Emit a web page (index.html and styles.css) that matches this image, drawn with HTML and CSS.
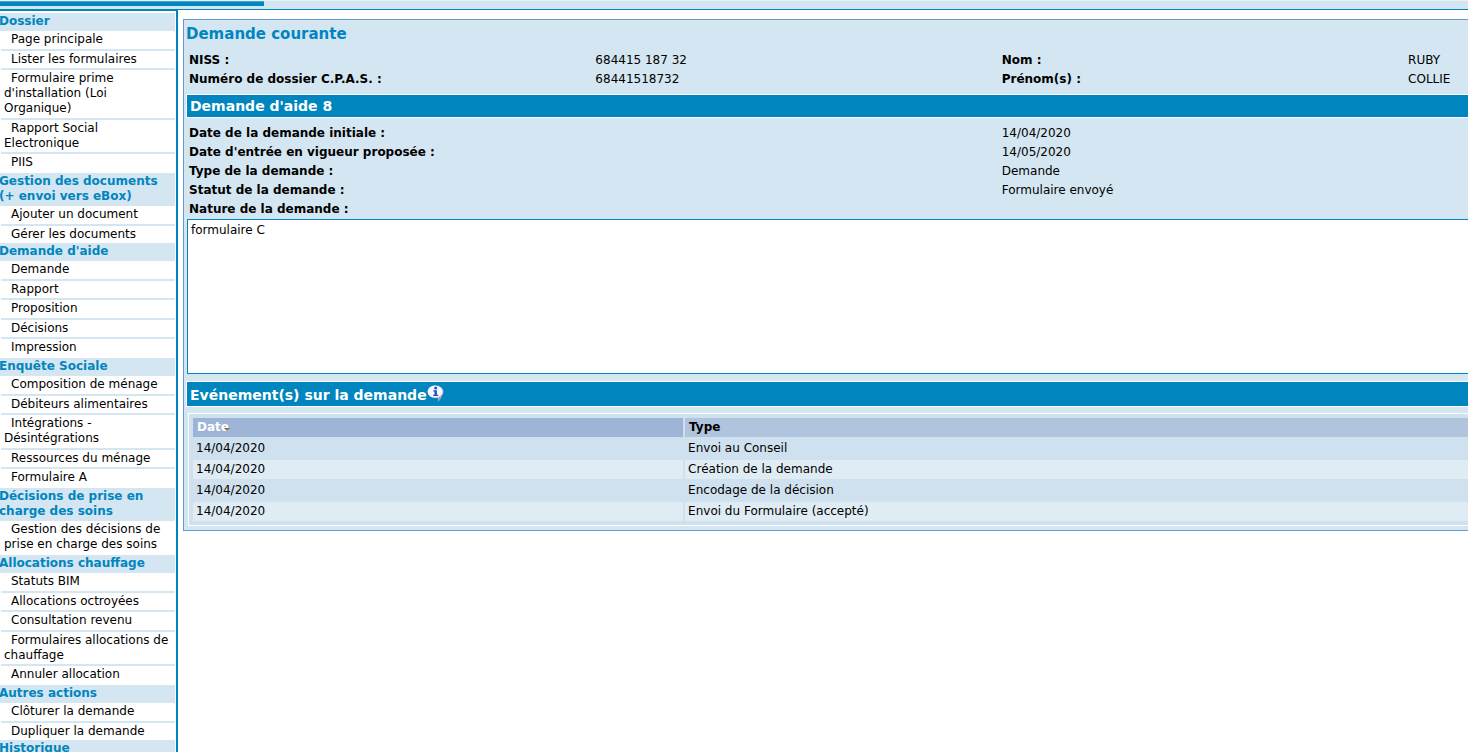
FILE: index.html
```html
<!DOCTYPE html>
<html lang="fr">
<head>
<meta charset="utf-8">
<title>Demande courante</title>
<link rel="stylesheet" href="styles.css">
</head>
<body>
<header class="topbar"><div class="topbar-tab"></div></header>
<div class="layout">
  <nav class="sidebar">
    <h2>Dossier</h2>
    <ul>
      <li><a href="#">Page principale</a></li>
      <li><a href="#">Lister les formulaires</a></li>
      <li><a href="#">Formulaire prime d'installation (Loi Organique)</a></li>
      <li><a href="#">Rapport Social Electronique</a></li>
      <li><a href="#">PIIS</a></li>
    </ul>
    <h2>Gestion des documents (+ envoi vers eBox)</h2>
    <ul>
      <li><a href="#">Ajouter un document</a></li>
      <li><a href="#">Gérer les documents</a></li>
    </ul>
    <h2>Demande d'aide</h2>
    <ul>
      <li><a href="#">Demande</a></li>
      <li><a href="#">Rapport</a></li>
      <li><a href="#">Proposition</a></li>
      <li><a href="#">Décisions</a></li>
      <li><a href="#">Impression</a></li>
    </ul>
    <h2>Enquête Sociale</h2>
    <ul>
      <li><a href="#">Composition de ménage</a></li>
      <li><a href="#">Débiteurs alimentaires</a></li>
      <li><a href="#">Intégrations - Désintégrations</a></li>
      <li><a href="#">Ressources du ménage</a></li>
      <li><a href="#">Formulaire A</a></li>
    </ul>
    <h2>Décisions de prise en charge des soins</h2>
    <ul>
      <li><a href="#">Gestion des décisions de prise en charge des soins</a></li>
    </ul>
    <h2>Allocations chauffage</h2>
    <ul>
      <li><a href="#">Statuts BIM</a></li>
      <li><a href="#">Allocations octroyées</a></li>
      <li><a href="#">Consultation revenu</a></li>
      <li><a href="#">Formulaires allocations de chauffage</a></li>
      <li><a href="#">Annuler allocation</a></li>
    </ul>
    <h2>Autres actions</h2>
    <ul>
      <li><a href="#">Clôturer la demande</a></li>
      <li><a href="#">Dupliquer la demande</a></li>
    </ul>
    <h2>Historique</h2>
  </nav>
  <main class="content">
    <section class="panel">
      <h1>Demande courante</h1>
      <dl class="fields identity">
        <dt>NISS :</dt><dd>684415 187 32</dd>
        <dt>Nom :</dt><dd>RUBY</dd>
        <dt>Numéro de dossier C.P.A.S. :</dt><dd>68441518732</dd>
        <dt>Prénom(s) :</dt><dd>COLLIE</dd>
      </dl>
      <h2 class="band">Demande d'aide 8</h2>
      <dl class="fields request">
        <dt>Date de la demande initiale :</dt><dd>14/04/2020</dd>
        <dt>Date d'entrée en vigueur proposée :</dt><dd>14/05/2020</dd>
        <dt>Type de la demande :</dt><dd>Demande</dd>
        <dt>Statut de la demande :</dt><dd>Formulaire envoyé</dd>
      </dl>
      <label class="nature-label" for="nature">Nature de la demande :</label>
      <div class="nature-field"><textarea class="nature" id="nature" spellcheck="false">formulaire C</textarea></div>
      <h2 class="band band-events">Evénement(s) sur la demande<svg class="info" viewBox="0 0 17 17" aria-hidden="true"><path d="M15 9 C15 13 13.500 15 10.500 17 C11.500 15 11.500 13.500 9 12.500Z" fill="#9aa0b4"/><ellipse cx="8.500" cy="6.800" rx="8" ry="6.300" fill="#c3cae2"/><ellipse cx="8" cy="6.500" rx="7.300" ry="5.900" fill="#f4f5fd"/><circle cx="8.700" cy="3" r="1.500" fill="#1f50c8"/><path d="M6.300 5.200H9.900V9.800H11.200V11H6.300V9.800H7.500V6.400H6.300Z" fill="#1f50c8"/></svg></h2>
      <div class="table-box">
        <table>
          <thead>
            <tr><th class="sorted">Date<span class="sort"></span></th><th>Type</th></tr>
          </thead>
          <tbody>
            <tr><td>14/04/2020</td><td>Envoi au Conseil</td></tr>
            <tr><td>14/04/2020</td><td>Création de la demande</td></tr>
            <tr><td>14/04/2020</td><td>Encodage de la décision</td></tr>
            <tr><td>14/04/2020</td><td>Envoi du Formulaire (accepté)</td></tr>
          </tbody>
        </table>
      </div>
    </section>
  </main>
</div>
</body>
</html>
```
FILE: styles.css
```css
* { box-sizing: border-box; }
html { height: 100%; }
body {
  margin: 0;
  height: 100%;
  overflow: hidden;
  display: flex;
  flex-direction: column;
  background: #fff;
  color: #000;
  font: 12px/15px Verdana, "DejaVu Sans", sans-serif;
}
h1, h2, ul, dl, dd { margin: 0; padding: 0; }

.topbar {
  flex: none;
  height: 10px;
  background: #d4e6f1;
  border-top: 1px solid #e6f0f7;
  border-bottom: 1px solid #0085be;
}
.topbar-tab {
  width: 18%;
  height: 5px;
  background: #0085be;
  border-top: 1px solid #45a5cf;
}

.layout { flex: 1; min-height: 0; display: flex; }

.sidebar {
  flex: none;
  width: 178px;
  padding: 2px 1px 0 1px;
  border-top: 1px solid #0085be;
  border-right: 2px solid #0085be;
  overflow: hidden;
}
.sidebar h2 {
  padding: 1px 0 2px;
  margin-left: -2px;
  font-size: 12px;
  line-height: 15px;
  color: #0085be;
  background: #d4e6f1;
}
.sidebar ul { list-style: none; }
.sidebar li {
  padding: 1px 0 2px 3px;
  text-indent: 7px;
  border-bottom: 2px solid #d4e6f1;
}
.sidebar li:nth-child(even) { padding-bottom: 1px; }
.sidebar li:last-child { border-bottom: 0; }
.sidebar li:last-child:nth-child(odd) { padding-bottom: 3px; }
.sidebar a { color: #000; text-decoration: none; }

.content { flex: 1; min-width: 0; padding: 9px 0 0 5px; }
.panel {
  padding: 4px 0 4px 2px;
  background: #d4e6f1;
  border: 1px solid #6699cc;
  border-right: 0;
}
.panel h1 {
  color: #0085be;
  font-size: 15px;
  line-height: 20px;
  margin-bottom: 7px;
}
.fields { display: grid; line-height: 19px; padding-left: 3px; }
.fields dt, .nature-label { font-weight: bold; }
.identity { grid-template-columns: 407fr 407fr 407fr 60fr; margin-bottom: 5px; }
.request { grid-template-columns: 814fr 467fr; margin-top: 6px; }

.band {
  padding: 2px 3px;
  color: #fff;
  background: #0085be;
  border: 1px solid #fff;
  border-right: 0;
  font-size: 14px;
  line-height: 18px;
}
.nature-label { display: block; padding-left: 3px; line-height: 19px; }
.nature-field { padding: 0 0 7px 1px; }
.nature {
  display: block;
  width: 100%;
  height: 155px;
  padding: 3px;
  border: 1px solid #0085be;
  border-right: 0;
  background: #fff;
  color: #000;
  font: inherit;
  resize: none;
  outline: 0;
}
.band-events {
  display: flex;
  padding-top: 3px;
  padding-bottom: 1px;
  line-height: 20px;
  margin-bottom: 6px;
}
.info { width: 17px; height: 17px; flex: none; }

.table-box {
  margin-left: 2px;
  padding: 2px 0 2px 2px;
  background: #cfe0ee;
  border: 1px solid #fff;
  border-right: 0;
}
table { width: calc(100% + 2px); border-spacing: 2px; table-layout: fixed; }
th, td { height: 19px; padding: 0 3px; text-align: left; line-height: 19px; }
th { padding-left: 4px; background: #b0c4de; }
th.sorted { width: 38.5%; color: #fff; background: #9db4d7; }
tbody tr:nth-child(even) td { background: #dfecf4; }
.sort {
  display: inline-block;
  margin-left: -5px;
  border: 3px solid transparent;
  border-bottom: 0;
  border-top-color: #8a7248;
}
```
